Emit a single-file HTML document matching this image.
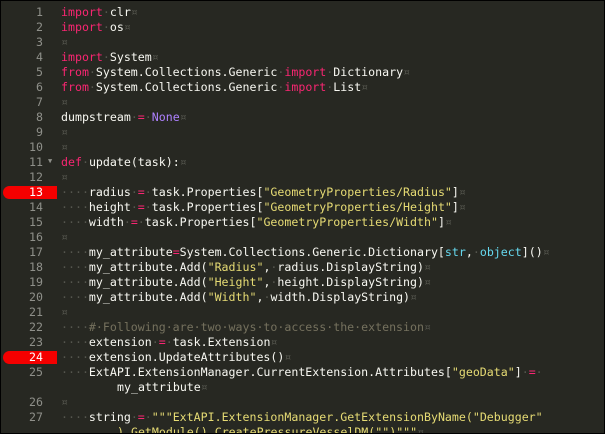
<!DOCTYPE html>
<html><head><style>
html,body{margin:0;padding:0;}
body{width:605px;height:434px;overflow:hidden;background:#272822;position:relative;}
#frame{position:absolute;left:0;top:0;width:603px;height:432px;border:1px solid #000;overflow:hidden;background:#272822;}
.l{position:absolute;left:0;height:15px;width:603px;font-family:"DejaVu Sans Mono","Liberation Mono",monospace;font-size:11.6px;line-height:15px;white-space:pre;color:#f8f8f2;}
.n{position:absolute;left:0;width:42px;text-align:right;color:#8f908a;}
.c{position:absolute;left:60px;}
.bp{position:absolute;left:2px;top:1px;width:54px;height:13px;background:#f40000;border-radius:7px 0 0 7px;}
.bpn{color:#fff;}
.k{color:#f92672}.p{color:#ae81ff}.s{color:#e6db74}.t{color:#66d9ef}.cm{color:#75715e}.w{color:#55564e}
.fold{position:absolute;left:47px;top:-1px;color:#8f908a;font-size:7px;}
</style></head><body><div id="frame">
<div class="l" style="top:4px"><span class="n">1</span><span class="c"><span class="k">import</span><span class="w">·</span>clr<span class="w">¤</span></span></div>
<div class="l" style="top:19px"><span class="n">2</span><span class="c"><span class="k">import</span><span class="w">·</span>os<span class="w">¤</span></span></div>
<div class="l" style="top:34px"><span class="n">3</span><span class="c"><span class="w">¤</span></span></div>
<div class="l" style="top:49px"><span class="n">4</span><span class="c"><span class="k">import</span><span class="w">·</span>System<span class="w">¤</span></span></div>
<div class="l" style="top:64px"><span class="n">5</span><span class="c"><span class="k">from</span><span class="w">·</span>System.Collections.Generic<span class="w">·</span><span class="k">import</span><span class="w">·</span>Dictionary<span class="w">¤</span></span></div>
<div class="l" style="top:79px"><span class="n">6</span><span class="c"><span class="k">from</span><span class="w">·</span>System.Collections.Generic<span class="w">·</span><span class="k">import</span><span class="w">·</span>List<span class="w">¤</span></span></div>
<div class="l" style="top:94px"><span class="n">7</span><span class="c"><span class="w">¤</span></span></div>
<div class="l" style="top:109px"><span class="n">8</span><span class="c">dumpstream<span class="w">·</span><span class="k">=</span><span class="w">·</span><span class="p">None</span><span class="w">¤</span></span></div>
<div class="l" style="top:124px"><span class="n">9</span><span class="c"><span class="w">¤</span></span></div>
<div class="l" style="top:139px"><span class="n">10</span><span class="c"><span class="w">¤</span></span></div>
<div class="l" style="top:154px"><span class="n">11</span><span class="fold">▼</span><span class="c"><span class="k">def</span><span class="w">·</span>update(task):<span class="w">¤</span></span></div>
<div class="l" style="top:169px"><span class="n">12</span><span class="c"><span class="w">¤</span></span></div>
<div class="l" style="top:184px"><span class="bp"></span><span class="n bpn">13</span><span class="c"><span class="w">····</span>radius<span class="w">·</span><span class="k">=</span><span class="w">·</span>task.Properties[<span class="s">"GeometryProperties/Radius"</span>]<span class="w">¤</span></span></div>
<div class="l" style="top:199px"><span class="n">14</span><span class="c"><span class="w">····</span>height<span class="w">·</span><span class="k">=</span><span class="w">·</span>task.Properties[<span class="s">"GeometryProperties/Height"</span>]<span class="w">¤</span></span></div>
<div class="l" style="top:214px"><span class="n">15</span><span class="c"><span class="w">····</span>width<span class="w">·</span><span class="k">=</span><span class="w">·</span>task.Properties[<span class="s">"GeometryProperties/Width"</span>]<span class="w">¤</span></span></div>
<div class="l" style="top:229px"><span class="n">16</span><span class="c"><span class="w">¤</span></span></div>
<div class="l" style="top:244px"><span class="n">17</span><span class="c"><span class="w">····</span>my_attribute<span class="k">=</span>System.Collections.Generic.Dictionary[<span class="t">str</span>,<span class="w">·</span><span class="t">object</span>]()<span class="w">¤</span></span></div>
<div class="l" style="top:259px"><span class="n">18</span><span class="c"><span class="w">····</span>my_attribute.Add(<span class="s">"Radius"</span>,<span class="w">·</span>radius.DisplayString)<span class="w">¤</span></span></div>
<div class="l" style="top:274px"><span class="n">19</span><span class="c"><span class="w">····</span>my_attribute.Add(<span class="s">"Height"</span>,<span class="w">·</span>height.DisplayString)<span class="w">¤</span></span></div>
<div class="l" style="top:289px"><span class="n">20</span><span class="c"><span class="w">····</span>my_attribute.Add(<span class="s">"Width"</span>,<span class="w">·</span>width.DisplayString)<span class="w">¤</span></span></div>
<div class="l" style="top:304px"><span class="n">21</span><span class="c"><span class="w">¤</span></span></div>
<div class="l" style="top:319px"><span class="n">22</span><span class="c"><span class="w">····</span><span class="cm">#·Following·are·two·ways·to·access·the·extension</span><span class="w">¤</span></span></div>
<div class="l" style="top:334px"><span class="n">23</span><span class="c"><span class="w">····</span>extension<span class="w">·</span><span class="k">=</span><span class="w">·</span>task.Extension<span class="w">¤</span></span></div>
<div class="l" style="top:349px"><span class="bp"></span><span class="n bpn">24</span><span class="c"><span class="w">····</span>extension.UpdateAttributes()<span class="w">¤</span></span></div>
<div class="l" style="top:364px"><span class="n">25</span><span class="c"><span class="w">····</span>ExtAPI.ExtensionManager.CurrentExtension.Attributes[<span class="s">"geoData"</span>]<span class="w">·</span><span class="k">=</span><span class="w">·</span></span></div>
<div class="l" style="top:379px"><span class="c" style="left:116px">my_attribute<span class="w">¤</span></span></div>
<div class="l" style="top:394px"><span class="n">26</span><span class="c"><span class="w">¤</span></span></div>
<div class="l" style="top:409px"><span class="n">27</span><span class="c"><span class="w">····</span>string<span class="w">·</span><span class="k">=</span><span class="w">·</span><span class="s">"""ExtAPI.ExtensionManager.GetExtensionByName("Debugger"</span></span></div>
<div class="l" style="top:424px"><span class="c" style="left:116px"><span class="s">).GetModule().CreatePressureVesselDM("")"""</span><span class="w">¤</span></span></div>
</div></body></html>
